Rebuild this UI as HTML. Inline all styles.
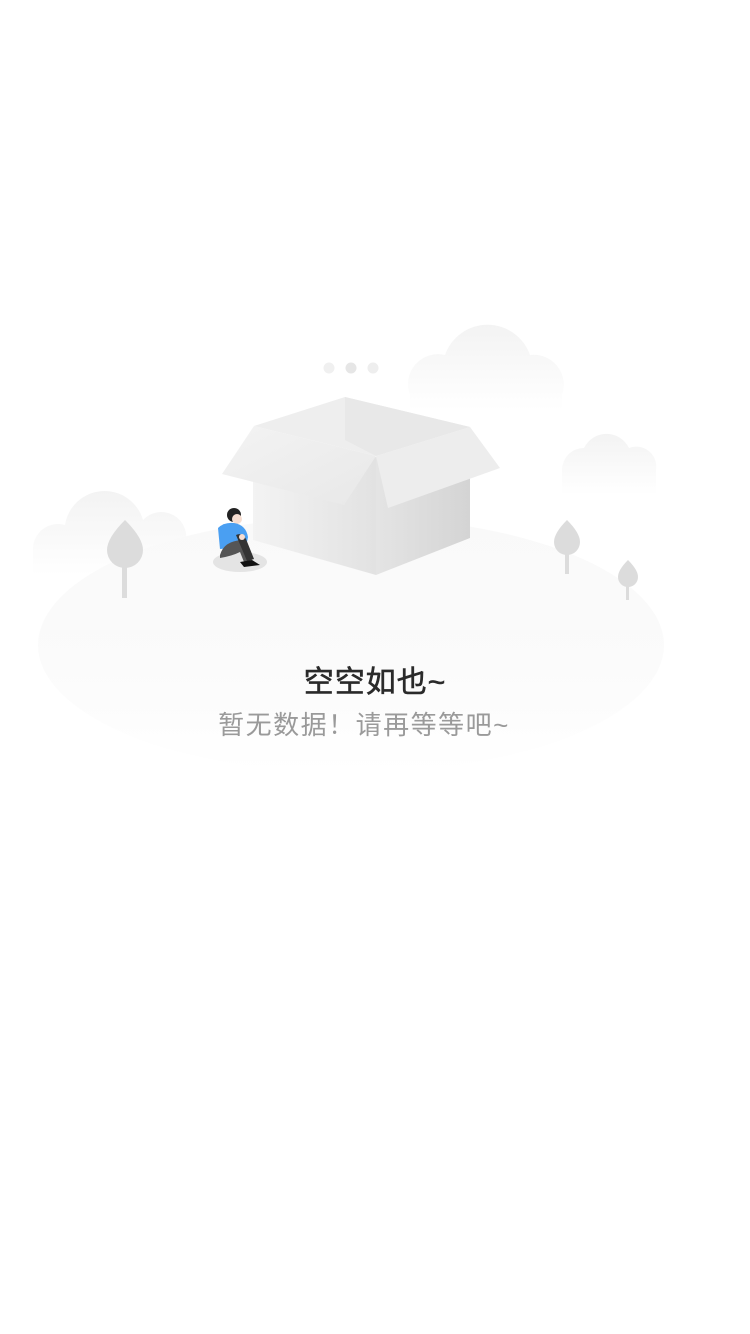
<!DOCTYPE html>
<html><head><meta charset="utf-8"><style>
html,body{margin:0;padding:0;background:#fff;width:750px;height:1334px;overflow:hidden;position:relative;}
svg{position:absolute;left:0;top:0;}
.t1{position:absolute;left:0;width:750px;top:657px;text-align:center;font:30px "Liberation Sans","Noto Sans CJK SC",sans-serif;color:#2a2a2a;letter-spacing:1px;-webkit-text-stroke:0.6px #2a2a2a;}
.t2{position:absolute;left:0;width:728px;top:705px;text-align:center;font:26px "Liberation Sans","Noto Sans CJK SC",sans-serif;color:#9a9a9a;letter-spacing:1.5px;}
</style></head><body>
<svg width="750" height="1334" viewBox="0 0 750 1334">
<defs>
<linearGradient id="cl" x1="0" y1="0" x2="0" y2="1"><stop offset="0" stop-color="#f3f3f3"/><stop offset="1" stop-color="#fff"/></linearGradient>
<linearGradient id="gr" x1="0" y1="0" x2="0" y2="1"><stop offset="0" stop-color="#f9f9f9"/><stop offset="0.6" stop-color="#fbfbfb"/><stop offset="1" stop-color="#fff"/></linearGradient>
<linearGradient id="lf" x1="0" y1="0" x2="1" y2="0"><stop offset="0" stop-color="#f3f3f3"/><stop offset="1" stop-color="#e2e2e2"/></linearGradient>
<linearGradient id="rf" x1="0" y1="0" x2="1" y2="0"><stop offset="0" stop-color="#e4e4e4"/><stop offset="1" stop-color="#d4d4d4"/></linearGradient>
<linearGradient id="fl" x1="0" y1="0" x2="1" y2="1"><stop offset="0" stop-color="#f3f3f3"/><stop offset="1" stop-color="#e8e8e8"/></linearGradient>
</defs>
<g fill="url(#cl)">
<path d="M410 395 a30 30 0 0 1 35 -40 a45 45 0 0 1 85 0 a30 30 0 0 1 32 40 l0 15 l-152 0z"/>
<path d="M562 470 a22 22 0 0 1 22 -22 a25 25 0 0 1 45 0 a20 20 0 0 1 27 22 l0 25 l-94 0z"/>
<path d="M33 550 a25 25 0 0 1 32 -25 a40 40 0 0 1 78 -5 a25 25 0 0 1 42 25 l0 30 l-152 0z"/>
</g>
<ellipse cx="351" cy="645" rx="313" ry="128" fill="url(#gr)"/>
<circle cx="329" cy="368" r="5.5" fill="#f0f0f0"/>
<circle cx="351" cy="368" r="5.5" fill="#e6e6e6"/>
<circle cx="373" cy="368" r="5.5" fill="#eeeeee"/>
<polygon points="254,426 345,397 470,427 376,456" fill="#eeeeee"/>
<polygon points="345,397 470,427 376,456 345,440" fill="#e8e8e8"/>
<polygon points="253,478 376,457 376,575 253,540" fill="url(#lf)"/>
<polygon points="376,457 470,430 470,538 376,575" fill="url(#rf)"/>
<polygon points="222,474 254,426 376,456 344,505" fill="url(#fl)"/>
<polygon points="376,456 470,427 500,468 388,508" fill="#ededed"/>
<g fill="#dcdcdc">
<path d="M125 520 q-18 18 -18 30 a18 18 0 0 0 36 0 q0 -12 -18 -30z"/><rect x="122" y="566" width="5" height="32"/>
<path d="M567 520 q-13 13 -13 22 a13 13 0 0 0 26 0 q0 -9 -13 -22z"/><rect x="565" y="552" width="4" height="22"/>
<path d="M628 560 q-10 10 -10 17 a10 10 0 0 0 20 0 q0 -7 -10 -17z"/><rect x="626" y="584" width="3" height="16"/>
</g>
<ellipse cx="240" cy="562" rx="27" ry="10" fill="#e4e4e4"/>
<circle cx="234" cy="515" r="7" fill="#222"/>
<circle cx="237" cy="519" r="5" fill="#f6ddd0"/>
<path d="M218 528 q6 -6 16 -5 q12 2 14 14 l-2 10 l-26 2z" fill="#4a9ff2"/>
<path d="M220 555 q4 -14 22 -15 l10 20 l-8 2 l-4 -10 q-8 4 -20 6z" fill="#555"/>
<path d="M236 535 q6 -3 10 4 l8 20 l-7 2z" fill="#333"/>
<path d="M240 562 l12 -2 l8 5 l-16 2z" fill="#111"/>
<circle cx="242" cy="537" r="3" fill="#f6ddd0"/>
</svg>
<div class="t1">空空如也~</div>
<div class="t2">暂无数据！请再等等吧~</div>
</body></html>
